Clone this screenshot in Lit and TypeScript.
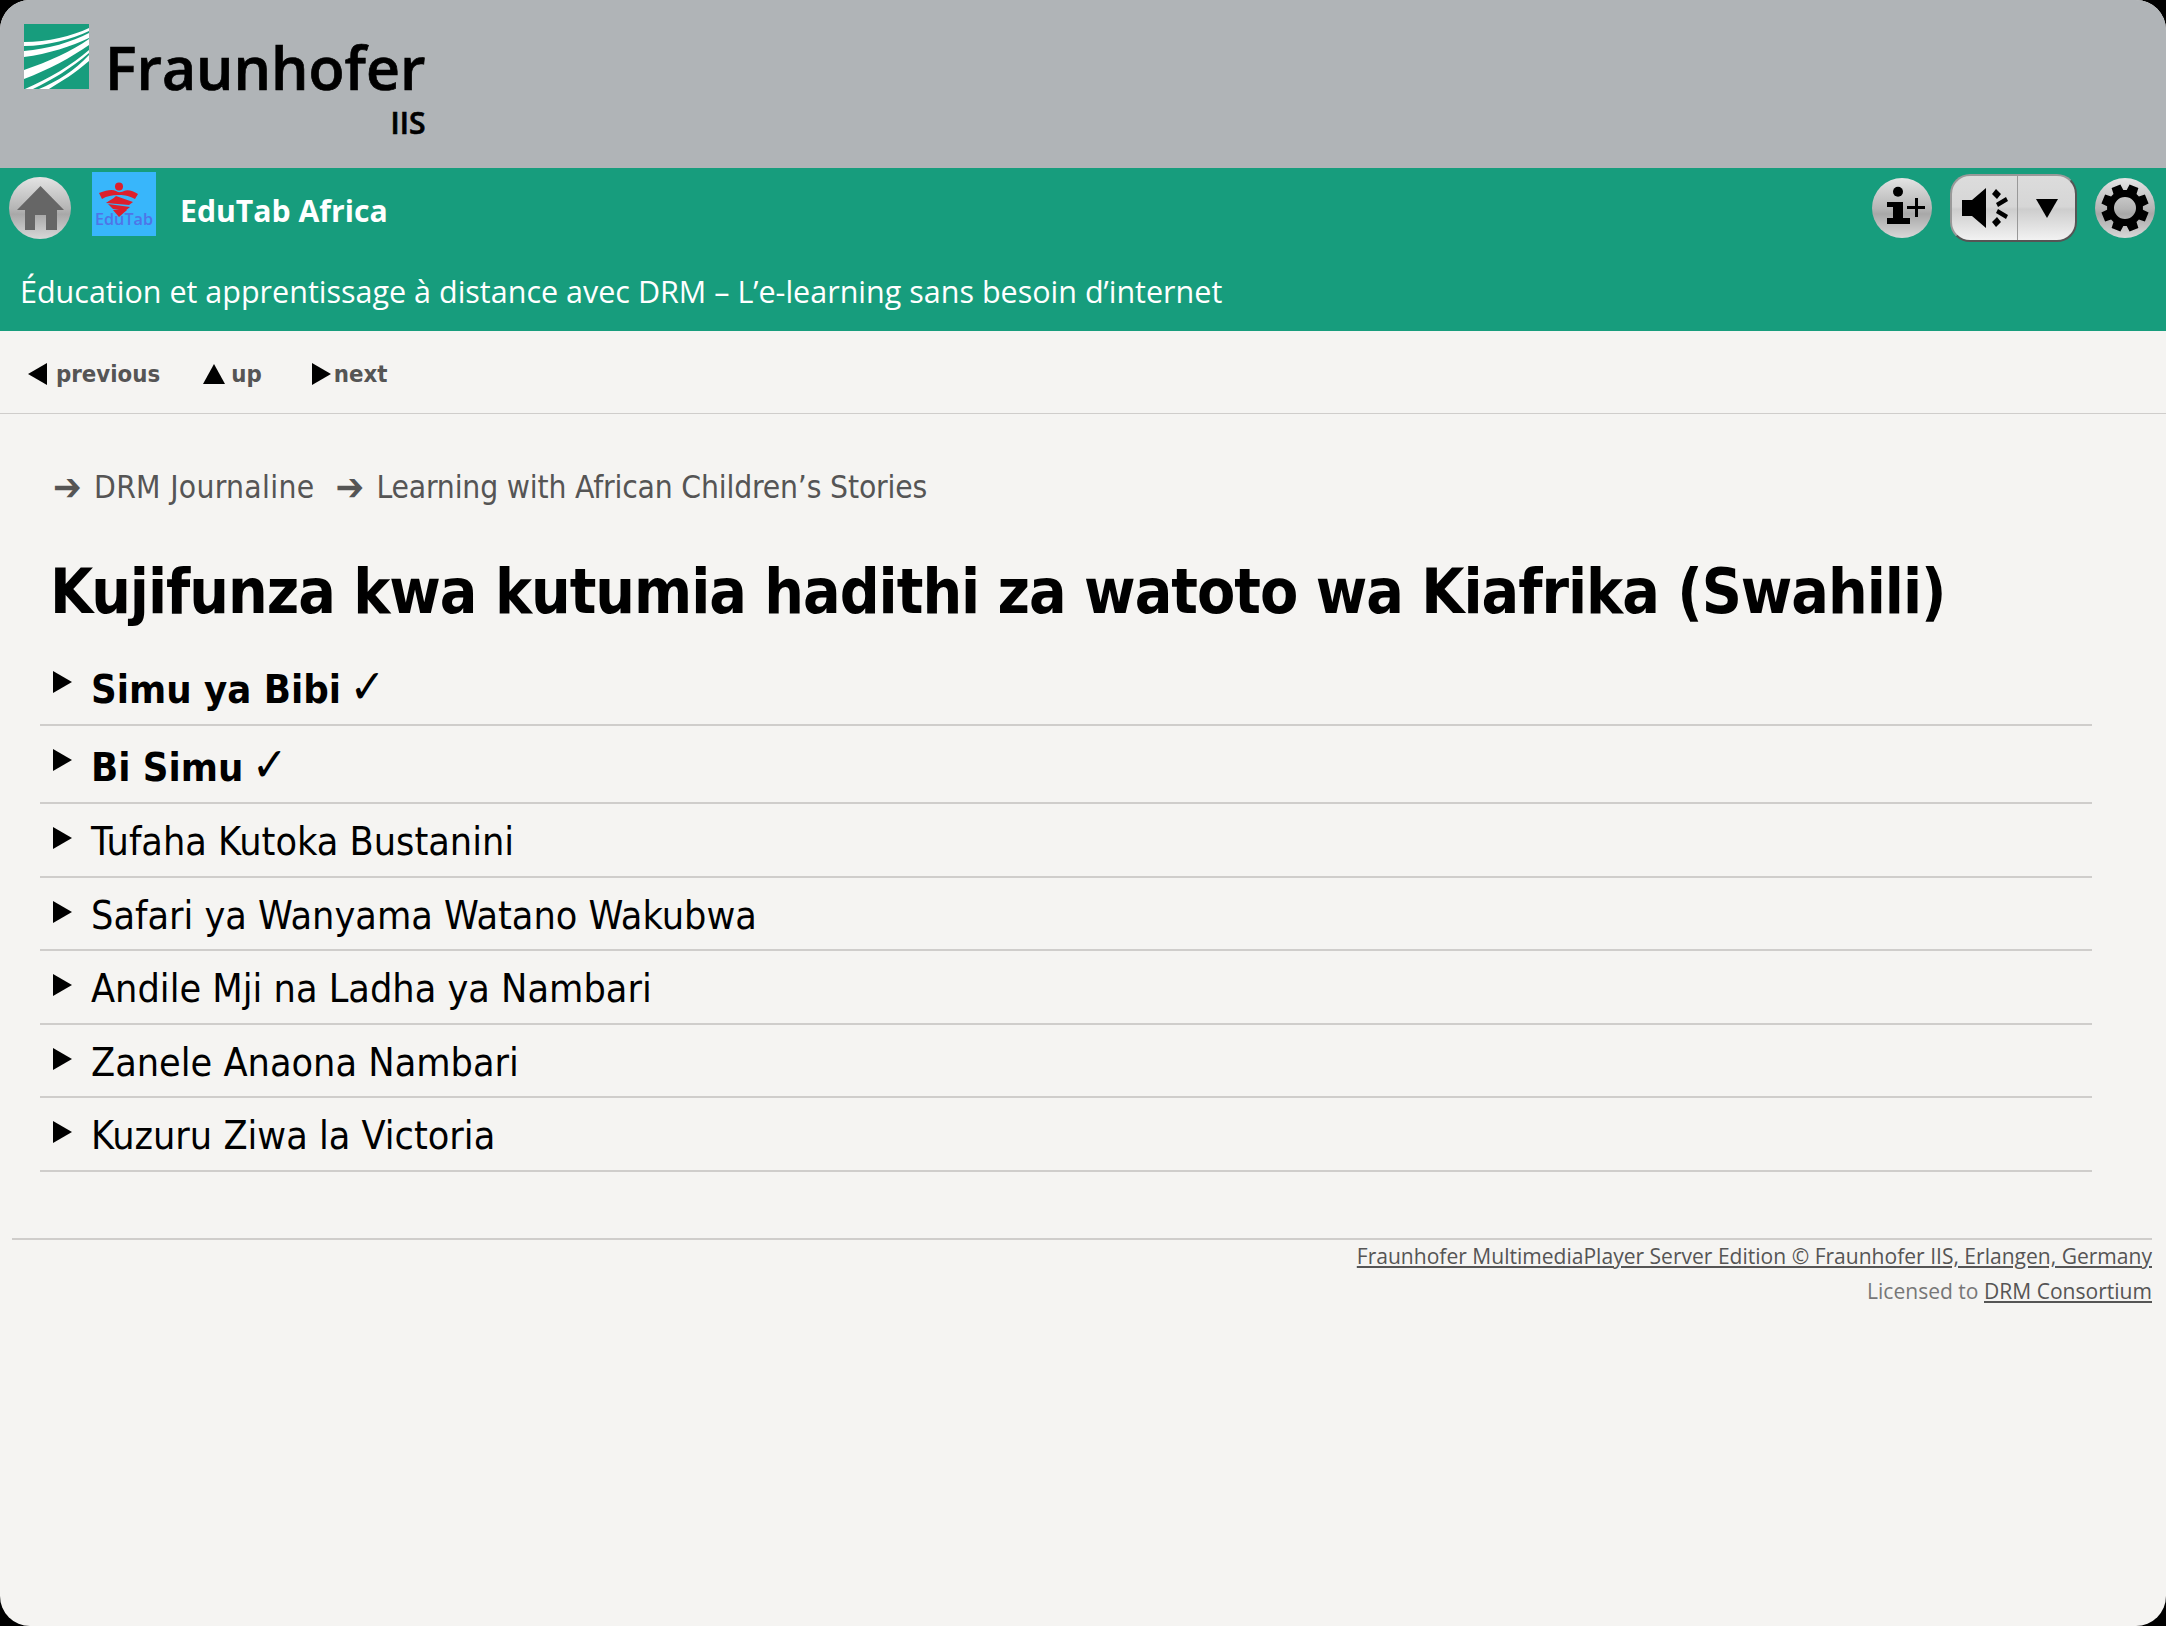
import {LitElement, css, html} from 'lit';
import {customElement} from 'lit/decorators.js';

const STORIES = [
  {title: 'Simu ya Bibi', done: true},
  {title: 'Bi Simu', done: true},
  {title: 'Tufaha Kutoka Bustanini', done: false},
  {title: 'Safari ya Wanyama Watano Wakubwa', done: false},
  {title: 'Andile Mji na Ladha ya Nambari', done: false},
  {title: 'Zanele Anaona Nambari', done: false},
  {title: 'Kuzuru Ziwa la Victoria', done: false},
];

// gear outline, 8 teeth around the centre of a 60x60 box
function gearPath() {
  const pts: string[] = [];
  for (let i = 0; i < 8; i++) {
    const a = (i * Math.PI) / 4 - Math.PI / 8;
    const corners: [number, number][] = [
      [18, -0.3],
      [24, -0.2],
      [24, 0.2],
      [18, 0.3],
    ];
    for (const [r, off] of corners) {
      pts.push(`${(30 + r * Math.cos(a + off)).toFixed(1)} ${(30 + r * Math.sin(a + off)).toFixed(1)}`);
    }
  }
  return `M${pts.join('L')}Z`;
}

const tri = (points: string, w: number, h: number) =>
  html`<svg class="tri" width=${w} height=${h} viewBox="0 0 ${w} ${h}"><polygon points=${points} fill="#000" /></svg>`;

@customElement('app-root')
export class AppRoot extends LitElement {
  static styles = css`
    :host {
      display: block;
      background: #000;
    }
    .page {
      min-height: 1626px;
      background: #f5f4f2;
      border-radius: 30px;
      overflow: hidden;
      font-family: 'DejaVu Sans Condensed', 'DejaVu Sans', sans-serif;
    }
    .brand {
      height: 168px;
      background: #b0b4b7;
      display: flex;
      align-items: flex-start;
      padding: 24px 0 0 24px;
      box-sizing: border-box;
      gap: 16px;
    }
    .brand svg {
      display: block;
    }
    .wordmark {
      display: flex;
      flex-direction: column;
      align-items: flex-end;
      font-family: 'Open Sans', sans-serif;
      font-weight: 600;
      color: #000;
      margin-top: 10px;
      -webkit-text-stroke: 0.7px #000;
    }
    .wordmark .name {
      font-size: 59px;
      line-height: 66px;
    }
    .wordmark .unit {
      font-size: 30px;
      line-height: 30px;
      margin-top: 8px;
    }
    .bar {
      height: 163px;
      background: #179d7d;
      color: #fff;
      box-sizing: border-box;
      font-family: 'Open Sans', sans-serif;
    }
    .bar-top {
      display: flex;
      align-items: center;
      height: 80px;
      padding: 0 11px 0 9px;
    }
    .round {
      width: 60px;
      height: 60px;
      border-radius: 50%;
      background: linear-gradient(#e4e4e4 0%, #b4b4b4 52%, #a8a8a8 60%, #d8d8d8 100%);
      display: flex;
      align-items: center;
      justify-content: center;
      flex: none;
    }
    .round.home {
      width: 62px;
      height: 62px;
    }
    .edutab {
      display: block;
      margin: 4px 0 0 21px;
      align-self: flex-start;
      flex: none;
    }
    .app-title {
      margin-left: 24px;
      padding-top: 4px;
      font-size: 30.2px;
      font-weight: 700;
      flex: 1;
    }
    .split {
      width: 127px;
      height: 68px;
      margin: 0 18px;
      box-sizing: border-box;
      border: 2px solid #999;
      border-bottom-color: #555;
      border-right-color: #555;
      border-radius: 20px;
      background: linear-gradient(#dcdcdc 0%, #d6d6d6 48%, #cdcdcd 52%, #f2f2f2 100%);
      display: flex;
      flex: none;
    }
    .split div {
      display: flex;
      align-items: center;
      justify-content: center;
    }
    .split .vol {
      width: 65px;
      border-right: 1px solid #999;
    }
    .split .arrow {
      flex: 1;
    }
    .subtitle {
      padding: 21px 0 0 20px;
      font-size: 30.5px;
      line-height: 44px;
    }
    .nav {
      height: 83px;
      box-sizing: border-box;
      border-bottom: 1px solid #cfcdcb;
      display: flex;
      align-items: center;
      padding: 3px 0 0 28px;
      color: #555;
      font-weight: 700;
      font-size: 23.75px;
    }
    .nav span {
      display: flex;
      align-items: center;
    }
    .tri {
      display: block;
      flex: none;
    }
    .prev {
      gap: 9px;
      margin-right: 43px;
    }
    .up {
      gap: 6px;
      margin-right: 50px;
    }
    .next {
      gap: 3px;
    }
    .crumbs {
      display: flex;
      align-items: center;
      padding: 50px 0 0 53px;
      color: #555;
      font-size: 31.5px;
      line-height: 46px;
    }
    .crumbs .sep {
      width: 41px;
      flex: none;
      font-size: 38px;
      line-height: 46px;
    }
    .crumbs .item {
      margin-right: 21px;
    }
    .crumbs .root {
      letter-spacing: 0.3px;
    }
    .crumbs .story {
      letter-spacing: -0.17px;
    }
    h1 {
      margin: 44px 0 0 50px;
      font-size: 62px;
      letter-spacing: -1px;
      line-height: 76px;
      font-weight: 700;
      color: #000;
    }
    ul {
      list-style: none;
      margin: 18px 74px 0 40px;
      padding: 0;
    }
    li {
      display: flex;
      align-items: flex-start;
      border-bottom: 2px solid #cfcdcb;
      height: 73.5px;
      box-sizing: border-box;
      font-size: 39.2px;
      line-height: 60px;
      padding-top: 8px;
      color: #000;
    }
    li.done {
      height: 78px;
      padding-top: 11px;
      font-size: 39.7px;
      font-weight: 700;
    }
    li .tri {
      margin: 15px 19px 0 13px;
    }
    li.done .tri {
      margin-top: 12px;
    }
    .check {
      font-weight: 400;
      font-size: 1.2em;
      line-height: 1;
      margin-left: -4px;
    }
    footer {
      margin: 66px 14px 0 12px;
      border-top: 2px solid #cfcdcb;
      text-align: right;
      font-family: 'Open Sans', sans-serif;
      font-size: 21.05px;
      line-height: 35px;
      color: #777;
    }
    footer div:first-child {
      margin-top: -1px;
    }
    footer a {
      color: #555;
      text-decoration: underline;
    }
  `;

  logo() {
    return html`<svg width="65" height="65" viewBox="0 0 65 65">
      <rect width="65" height="65" fill="#179d7d" />
      <path fill="#fff" d="M0 18C24 18 48 12 65 4V7C48 15 24 22 0 22Z" />
      <path fill="#fff" d="M0 27C24 25 48 18 65 9V14C48 22 24 30 0 33Z" />
      <path fill="#fff" d="M0 46C24 38 48 27 65 15V21C48 33 24 46 0 55Z" />
      <path fill="#fff" d="M1 65C24 55 48 41 65 26V29C48 44 26 57 9 65Z" />
      <path fill="#fff" d="M15 65C34 57 50 47 65 31V37C50 50 38 57 25 65Z" />
    </svg>`;
  }

  eduTab() {
    return html`<svg class="edutab" width="64" height="64" viewBox="0 0 64 64">
      <rect width="64" height="64" fill="#38b6fb" />
      <circle cx="27" cy="14.5" r="4" fill="#dc1f2c" />
      <path fill="#dc1f2c" d="M7 21C15 18 20 17 24 19C27 21 30 20 32 19C36 17 41 19 46 22L43 27C36 23 30 23 26 23C20 23 15 24 10 27Z" />
      <path fill="#dc1f2c" d="M24 24L41 30L37 33L14 31C18 28 21 27 24 24Z" />
      <path fill="#dc1f2c" d="M16 32L38 35L33 39L21 37Z" />
      <path fill="#dc1f2c" d="M21 38L35 38L27 45Z" />
      <text x="3" y="53" textLength="58" lengthAdjust="spacingAndGlyphs" fill="#4f74e8" font-family="'Open Sans', sans-serif" font-weight="600" font-size="16.5">EduTab</text>
    </svg>`;
  }

  render() {
    return html`<div class="page">
      <div class="brand">
        ${this.logo()}
        <div class="wordmark">
          <div class="name">Fraunhofer</div>
          <div class="unit">IIS</div>
        </div>
      </div>
      <div class="bar">
        <div class="bar-top">
          <div class="round home">
            <svg width="47" height="44" viewBox="0 0 47 44">
              <path fill="#666" d="M23.5 0L47 24H40V44H29V29H18V44H8V24H0Z" />
            </svg>
          </div>
          ${this.eduTab()}
          <div class="app-title">EduTab Africa</div>
          <div class="round">
            <svg width="60" height="60" viewBox="0 0 60 60">
              <circle cx="26" cy="13.7" r="5" fill="#000" />
              <path fill="#000" d="M15 24H31V40H38V46H15V40H21V29H15Z" />
              <path fill="#000" d="M35 28H43V20H46V28H53V31H46V39H43V31H35Z" />
            </svg>
          </div>
          <div class="split">
            <div class="vol">
              <svg width="46" height="40" viewBox="0 0 46 40">
                <path fill="#000" d="M0 12H10L24 0V40L10 28H0Z" />
                <path fill="#000" d="M30 6L34 1L39 6L35 11ZM34 15L44 9L46 13L36 19ZM36 21L46 27L44 31L34 25ZM35 29L39 34L34 39L30 34Z" />
              </svg>
            </div>
            <div class="arrow">
              <svg width="22" height="19" viewBox="0 0 22 19"><polygon points="0,0 22,0 11,19" fill="#000" /></svg>
            </div>
          </div>
          <div class="round">
            <svg width="60" height="60" viewBox="0 0 60 60">
              <path fill="#000" fill-rule="evenodd" d="${gearPath()}M30 19A11 11 0 1 0 30 41A11 11 0 1 0 30 19Z" />
            </svg>
          </div>
        </div>
        <div class="subtitle">Éducation et apprentissage à distance avec DRM – L’e-learning sans besoin d’internet</div>
      </div>
      <div class="nav">
        <span class="prev">${tri('0,11 19,0 19,22', 19, 22)}previous</span>
        <span class="up">${tri('11,0 22,20 0,20', 22, 20)}up</span>
        <span class="next">${tri('0,0 19,11 0,22', 19, 22)}next</span>
      </div>
      <div class="crumbs">
        <span class="sep">➔</span><span class="item root">DRM Journaline</span>
        <span class="sep">➔</span><span class="item story">Learning with African Children’s Stories</span>
      </div>
      <h1>Kujifunza kwa kutumia hadithi za watoto wa Kiafrika (Swahili)</h1>
      <ul>
        ${STORIES.map(
          (s) => html`<li class=${s.done ? 'done' : ''}>
            ${tri('0,0 19,11 0,22', 19, 22)}
            <span>${s.title}${s.done ? html` <span class="check">✓</span>` : ''}</span>
          </li>`,
        )}
      </ul>
      <footer>
        <div><a>Fraunhofer MultimediaPlayer Server Edition © Fraunhofer IIS, Erlangen, Germany</a></div>
        <div>Licensed to <a>DRM Consortium</a></div>
      </footer>
    </div>`;
  }
}
